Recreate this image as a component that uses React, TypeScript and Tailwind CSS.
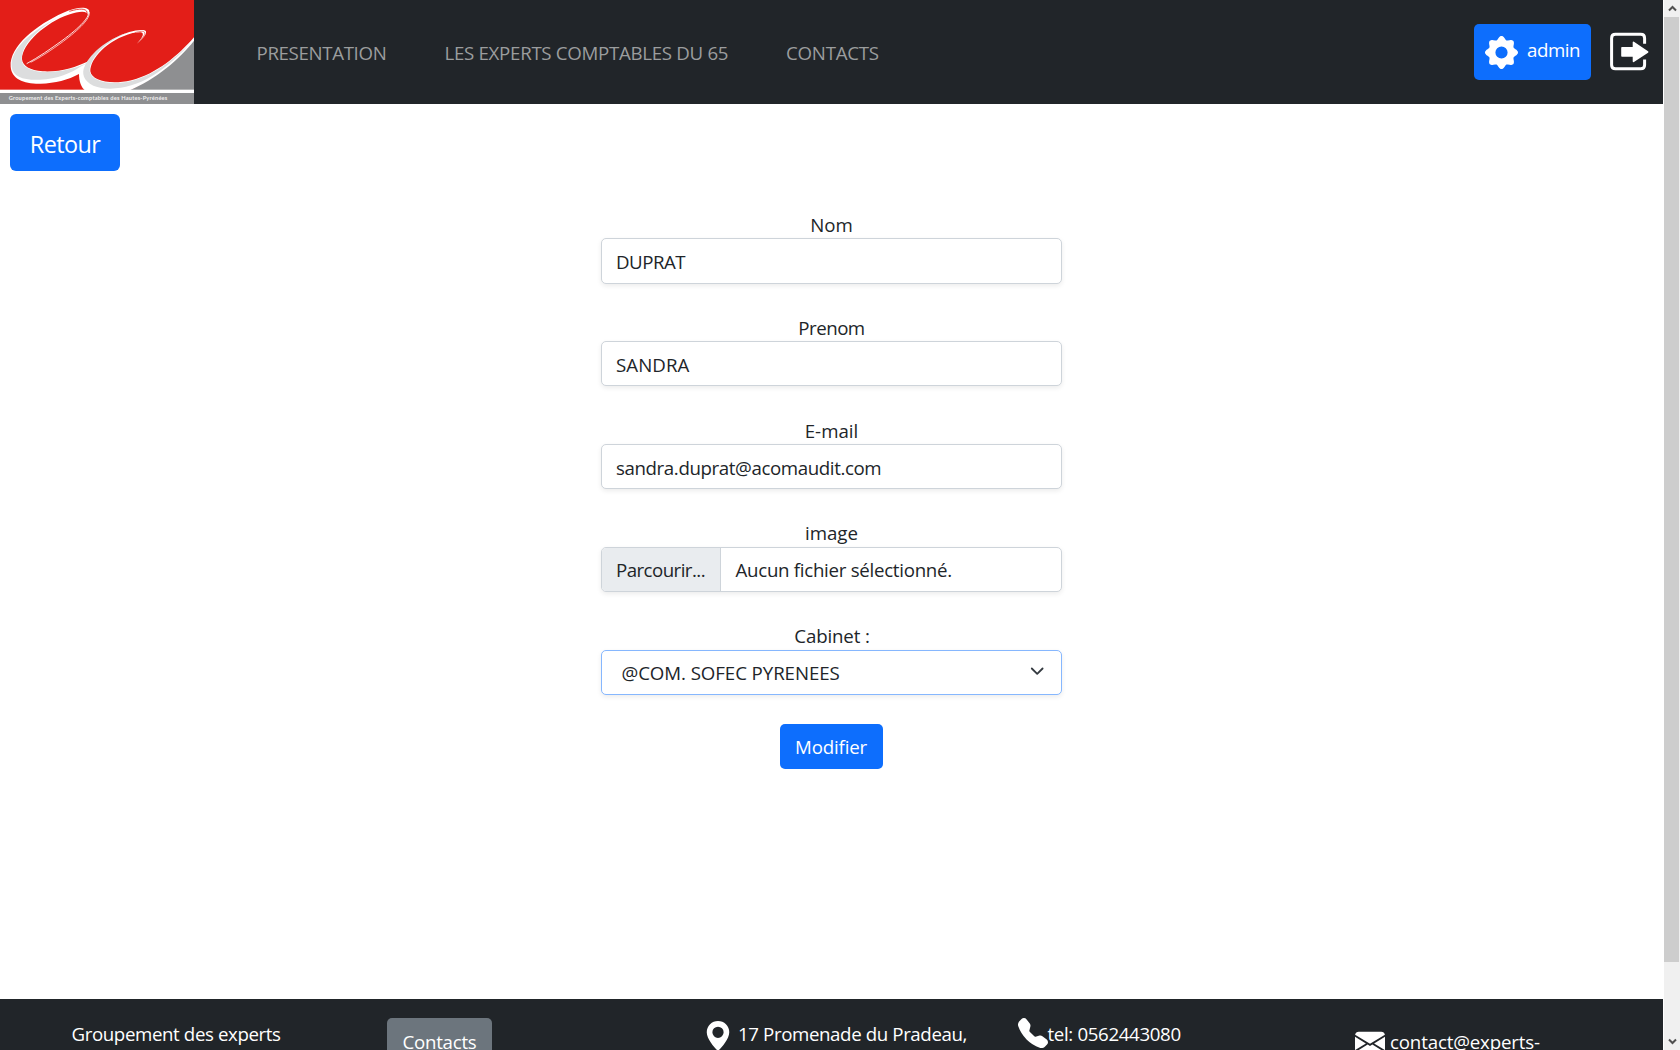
import React from "react";
import { BsEnvelopeFill, BsGeoAltFill, BsTelephoneFill } from "react-icons/bs";

function Logo() {
  return (
    <svg width="194" height="104" viewBox="0 0 582 312" className="block shrink-0" aria-label="Groupement des Experts-comptables">
      <rect width="582" height="312" fill="#e31e18" />
      <path d="M582 116C540 173 470 233 387 271H582Z" fill="#8e8f91" />
      <path
        d="M268 34C266 18 230 20 190 38C110 74 28 138 32 200C35 238 72 252 122 251C165 250 205 240 237 222C237 244 243 262 256 272H386C468 238 540 176 582 122V112C535 166 470 222 394 241C330 256 275 242 271 214C270 177 320 120 398 99L420 97C432 96 434 108 410 131C437 111 447 91 430 90C392 86 310 120 268 182C225 203 180 217 128 214C90 211 68 198 66 178C65 130 140 66 205 44C240 32 264 32 264 46Z"
        fill="#fff"
      />
      <path
        d="M170 54C90 96 30 150 35 200C39 230 70 241 120 239C172 237 215 218 241 200L267 187C225 206 180 218 128 216C88 213 64 198 65 176C66 128 120 85 170 54Z"
        fill="#dcddde"
      />
      <path
        d="M398 94C330 110 270 160 254 199C244 219 250 243 280 257C330 277 400 262 455 229C500 202 545 160 574 126C530 170 470 224 394 243C330 258 274 244 269 214C268 170 330 112 398 94Z"
        fill="#dcddde"
      />
      <path d="M262 30C278 42 246 78 186 122C150 148 115 172 80 191" fill="none" stroke="#fff" strokeWidth="2.6" />
      <path d="M268 36C271 56 238 88 190 124C155 150 118 174 92 187" fill="none" stroke="#fff" strokeWidth="2" />
      <path d="M208 34C240 24 258 26 261 36C262 50 244 68 216 90" fill="none" stroke="#e31e18" strokeWidth="2.4" />
      <path d="M404 98C426 92 437 92 434 103C430 113 421 122 411 129" fill="none" stroke="#e31e18" strokeWidth="1.6" />
      <rect y="269" width="582" height="10" fill="#fff" />
      <rect y="279" width="582" height="33" fill="#8e8f91" />
      <text x="26" y="300" textLength="476" fontSize="17" fontWeight="700" fontFamily="Lato, sans-serif" fill="#eeeeee">
        Groupement des Experts-comptables des Hautes-Pyrénées
      </text>
    </svg>
  );
}

// Outline of an eight-lobed gear, traced in polar coordinates
const gearOutline = Array.from({ length: 160 }, (_, i) => {
  const a = (i / 160) * Math.PI * 2;
  const r = 14.8 + 1.7 * Math.cos(8 * a);
  return `${(16.5 + r * Math.cos(a)).toFixed(2)} ${(16.5 + r * Math.sin(a)).toFixed(2)}`;
}).join("L");

function GearIcon() {
  return (
    <svg width="33" height="33" viewBox="0 0 33 33" className="mt-[12px] block">
      <path d={`M${gearOutline}ZM16.5 10.4a6.1 6.1 0 1 0 0 12.2a6.1 6.1 0 1 0 0-12.2Z`} fill="#fff" fillRule="evenodd" />
    </svg>
  );
}

function ExitIcon() {
  return (
    <svg width="39" height="39" viewBox="0 0 39 39" className="block" fill="none" stroke="#fff">
      <path d="M34.6 11.8V6.2Q34.6 2.3 30.7 2.3H5.5Q1.6 2.3 1.6 6.2V32.9Q1.6 36.8 5.5 36.8H30.7Q34.6 36.8 34.6 32.9V27.5" strokeWidth="3" />
      <path d="M12 15.8H23.5V10.3L37.6 20L23.5 29.4V24H12Z" fill="#fff" strokeWidth="1.6" strokeLinejoin="round" />
    </svg>
  );
}

function Field({ label, labelClass, children }: { label: string; labelClass: string; children: React.ReactNode }) {
  return (
    <div className="flex h-[103px] flex-col">
      <label className={`h-[28px] text-center leading-[28px] ${labelClass}`}>{label}</label>
      {children}
    </div>
  );
}

const box = "flex w-[461px] items-center rounded-[5px] border bg-white shadow-[0_2px_5px_rgba(0,0,0,0.08)]";

export default function App() {
  return (
    <div className="flex h-[1050px] w-full overflow-hidden bg-white font-['Open_Sans',sans-serif] text-[18.7px] leading-[28px] text-[#212529]">
      <div className="flex w-[1663px] shrink-0 flex-col">
        <header className="flex h-[104px] shrink-0 bg-[#212529]">
          <Logo />
          <nav className="flex pt-[39px] whitespace-nowrap text-[#9b9d9e]">
            <a className="ml-[62.5px] w-[188px] tracking-[-0.35px]">PRESENTATION</a>
            <a className="w-[341.5px] tracking-[-0.3px]">LES EXPERTS COMPTABLES DU 65</a>
            <a className="tracking-[-0.25px]">CONTACTS</a>
          </nav>
          <div className="mr-[14px] ml-auto flex">
            <button className="mt-[24px] mr-[19px] flex h-[56px] w-[117px] rounded-[5px] bg-[#0d6efd] pl-[10.5px] text-white">
              <GearIcon />
              <span className="mt-[12px] ml-[9.5px] tracking-[-0.46px]">admin</span>
            </button>
            <div className="mt-[32px]">
              <ExitIcon />
            </div>
          </div>
        </header>

        <main className="flex h-[895px] shrink-0 flex-col">
          <button className="mt-[10px] ml-[10px] h-[57px] w-[110px] shrink-0 rounded-[6px] bg-[#0d6efd] pt-[2px] text-[23.4px] tracking-[-0.6px] text-white">
            Retour
          </button>
          <form className="mt-[39px] ml-[601px] flex w-[461px] flex-col">
            <Field label="Nom" labelClass="pt-px">
              <div className={`${box} h-[46px] border-[#ced4da] pt-px pl-[14px] tracking-[-0.5px]`}>DUPRAT</div>
            </Field>
            <Field label="Prenom" labelClass="pt-px tracking-[-0.5px]">
              <div className={`${box} h-[45px] border-[#ced4da] pt-[2px] pl-[14px] tracking-[0.05px]`}>SANDRA</div>
            </Field>
            <Field label="E-mail" labelClass="pt-px">
              <div className={`${box} h-[45px] border-[#ced4da] pt-[2px] pl-[14px] tracking-[-0.39px]`}>sandra.duprat@acomaudit.com</div>
            </Field>
            <Field label="image" labelClass="">
              <div className="flex h-[45px] w-[461px] overflow-hidden rounded-[5px] border border-[#ced4da] bg-white leading-[44px] shadow-[0_2px_5px_rgba(0,0,0,0.08)]">
                <span className="w-[119px] shrink-0 border-r border-[#ced4da] bg-[#e9ecef] pl-[14px] tracking-[-0.55px]">Parcourir...</span>
                <span className="pl-[14.5px] tracking-[-0.28px]">Aucun fichier sélectionné.</span>
              </div>
            </Field>
            <Field label="Cabinet :" labelClass="pl-px tracking-[-0.15px]">
              <div className={`${box} h-[45px] justify-between border-[#86b7fe] pr-[17px] pl-[19.5px] tracking-[-0.08px]`}>
                <span>@COM. SOFEC PYRENEES</span>
                <svg width="14.4" height="14.4" viewBox="0 0 16 16" className="mb-[2px]" fill="none" stroke="#343a40" strokeWidth="2" strokeLinecap="round" strokeLinejoin="round">
                  <path d="M2 5l6 6 6-6" />
                </svg>
              </div>
            </Field>
            <button className="-mt-px -ml-px h-[45px] w-[103px] self-center rounded-[5px] bg-[#0d6efd] pt-px tracking-[-0.17px] text-white">Modifier</button>
          </form>
        </main>

        <footer className="flex h-[51px] shrink-0 overflow-hidden bg-[#212529] whitespace-nowrap text-white">
          <span className="w-[387px] pt-[21px] pl-[71.5px] tracking-[-0.39px]">Groupement des experts</span>
          <div className="w-[316px] pt-[19px]">
            <button className="h-[46px] w-[105px] rounded-[5px] bg-[#6c757d] pt-px tracking-[-0.25px]">Contacts</button>
          </div>
          <div className="flex w-[314.5px]">
            <BsGeoAltFill className="mt-[22px] size-[30px]" />
            <span className="pt-[21px] pl-[5px] tracking-[-0.39px]">17 Promenade du Pradeau,</span>
          </div>
          <div className="flex w-[337.5px]">
            <BsTelephoneFill className="mt-[19px] size-[30px]" />
            <span className="pt-[21px] tracking-[-0.35px]">tel: 0562443080</span>
          </div>
          <div className="flex">
            <BsEnvelopeFill className="mt-[29px] size-[30px]" />
            <span className="pt-[29px] pl-[5px] tracking-[-0.16px]">contact@experts-</span>
          </div>
        </footer>
      </div>

      <div className="ml-px flex w-[16px] flex-col items-center bg-[#f0f0f0]">
        <div className="flex h-[17px] items-center">
          <svg width="9" height="7" viewBox="0 0 9 7" fill="none" stroke="#505050" strokeWidth="2">
            <path d="M1 5.5L4.5 2L8 5.5" />
          </svg>
        </div>
        <div className="h-[945px] w-[15px] self-start bg-[#cdcdcd]" />
        <div className="mt-auto flex h-[17px] items-center">
          <svg width="9" height="7" viewBox="0 0 9 7" fill="none" stroke="#505050" strokeWidth="2">
            <path d="M1 1.5L4.5 5L8 1.5" />
          </svg>
        </div>
      </div>
    </div>
  );
}
